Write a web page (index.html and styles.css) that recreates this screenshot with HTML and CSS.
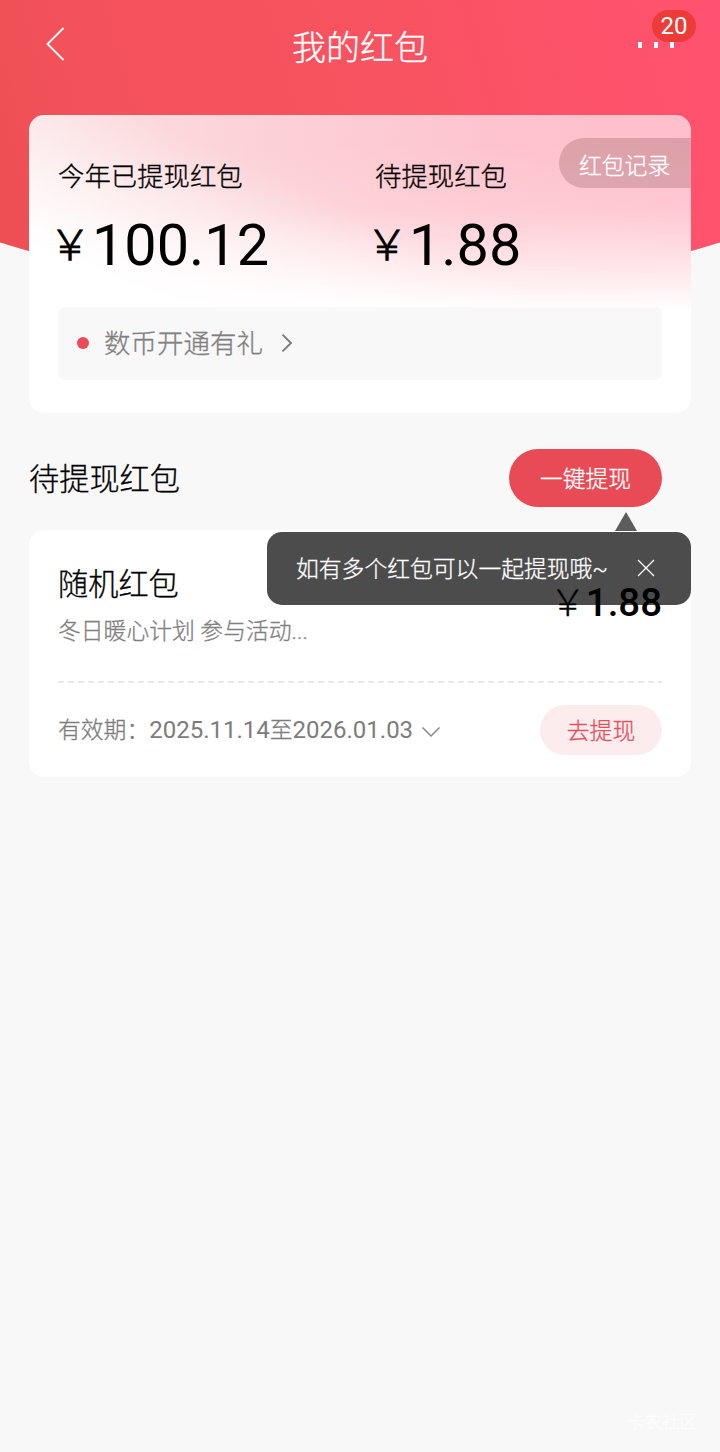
FILE: index.html
```html
<!DOCTYPE html>
<html lang="zh-CN">
<head>
<meta charset="utf-8">
<title>我的红包</title>
<link rel="stylesheet" href="styles.css">
</head>
<body>
<div class="page">
  <div class="hero-bg"></div>
  <header class="nav">
    <svg class="nav-back" width="20" height="36" viewBox="0 0 20 36"><path d="M18.5 2 2.5 18l16 16"/></svg>
    <h1 class="nav-title">我的红包</h1>
    <div class="nav-more"><i></i><i></i><i></i><span class="badge">20</span></div>
  </header>

  <section class="summary">
    <div class="stats">
      <div class="stat"><div class="stat-label">今年已提现红包</div><div class="stat-value"><span class="yen">￥</span>100.12</div></div>
      <div class="stat"><div class="stat-label">待提现红包</div><div class="stat-value"><span class="yen">￥</span>1.88</div></div>
    </div>
    <a class="record">红包记录</a>
    <div class="notice">
      <span class="dot"></span><span class="notice-text">数币开通有礼</span>
      <svg class="chevron" width="12" height="20" viewBox="0 0 12 20"><path d="m1.5 1.7 8.5 8.3-8.5 8.3"/></svg>
    </div>
  </section>

  <div class="section-head">
    <h2 class="section-title">待提现红包</h2>
    <button class="btn-all">一键提现</button>
  </div>

  <section class="packet">
    <div class="tip">
      <span class="tip-text">如有多个红包可以一起提现哦~</span>
      <svg class="tip-close" width="20" height="20" viewBox="0 0 20 20"><path d="m2 2 16 16M18 2 2 18"/></svg>
    </div>
    <div class="packet-top">
      <div>
        <h3 class="packet-name">随机红包</h3>
        <p class="packet-desc">冬日暖心计划 参与活动...</p>
      </div>
      <div class="packet-amount"><span class="yen-small">￥</span>1.88</div>
    </div>
    <div class="divider"></div>
    <div class="packet-foot">
      <span class="validity">有效期：<span class="date">2025.11.14</span>至<span class="date">2026.01.03</span></span>
      <svg class="expand" width="20" height="12" viewBox="0 0 20 12"><path d="m1.5 1.5 8.5 8.5 8.5-8.5"/></svg>
      <button class="btn-one">去提现</button>
    </div>
  </section>
  <div class="watermark">卡农社区</div>
</div>
</body>
</html>
```
FILE: styles.css
```css
* { box-sizing: border-box; }
body {
  margin: 0;
  background: #f8f8f8;
  font-family: Roboto, "Noto Sans CJK SC", sans-serif;
  font-weight: 300;
  -webkit-text-stroke: .3px currentColor;
  color: #000;
}
h1, h2, h3, p { margin: 0; font-weight: 300; }
svg { fill: none; display: block; }
button { border: 0; font: inherit; padding: 0; -webkit-text-stroke: .3px currentColor; }

.page {
  position: relative;
  height: 1452px;
  padding: 0 29px;
  display: flex;
  flex-direction: column;
  overflow: hidden;
}
.hero-bg {
  position: absolute;
  inset: 0 0 auto 0;
  height: 300px;
  background: linear-gradient(75deg, #ec4e52 0%, #f4525b 20%, #f85360 55%, #fd526a 82%, #ff5270 100%);
  clip-path: circle(1215px at 360px -918px);
}

.nav {
  position: relative;
  height: 115px;
  display: grid;
  grid-template-columns: 60px 1fr 60px;
  align-items: start;
}
.nav-back { margin: 26px 0 0 16px; stroke: #fff; stroke-width: 1.8; }
.nav-title {
  padding-top: 23px;
  font-size: 34px;
  line-height: 50px;
  color: #fff;
  text-align: center;
}
.nav-more { position: relative; z-index: 0; display: flex; gap: 12px; padding: 42px 0 0 7px; }
.nav-more i { width: 4px; height: 6px; background: #fff; }
.badge {
  position: absolute;
  top: 10px;
  left: 21px;
  width: 44px;
  height: 32px;
  border-radius: 16px;
  background: #ed3b38;
  color: #fff;
  font-size: 24px;
  font-weight: 400;
  -webkit-text-stroke: 0;
  line-height: 32px;
  text-align: center;
  z-index: -1;
}

.summary {
  position: relative;
  height: 298px;
  padding: 43px 29px 0;
  border-radius: 15px;
  background:
    linear-gradient(180deg, rgba(255,255,255,0) 10%, rgba(255,255,255,.15) 32%, rgba(255,255,255,.65) 53%, #fff 66%),
    linear-gradient(25deg, #fff 28%, rgba(255,255,255,0) 58%),
    linear-gradient(100deg, #fbe0e2 0%, #fcd1d6 35%, #fec4cd 65%, #ffbeca 100%);
}
.stats { display: grid; grid-template-columns: 317px 1fr; }
.stat-label { font-size: 26.4px; line-height: 38px; }
.stat-value {
  display: flex;
  align-items: baseline;
  margin-top: 12px;
  font-size: 57.6px;
  font-weight: 400;
  -webkit-text-stroke: 0;
  line-height: 76px;
  height: 76px;
}
.yen { position: relative; top: -5px; width: 43px; margin-left: -9px; font-size: 42px; font-weight: 300; -webkit-text-stroke: .8px currentColor; }
.record {
  position: absolute;
  top: 23px;
  right: 0;
  width: 132px;
  height: 50px;
  padding-left: 20px;
  border-radius: 25px 0 0 25px;
  background: rgba(111,58,62,.23);
  color: #fff;
  font-size: 22.8px;
  line-height: 58px;
}
.notice {
  display: flex;
  align-items: center;
  height: 73px;
  margin-top: 23px;
  padding: 0 0 1px 19px;
  border-radius: 7px;
  background: #f8f8f8;
  color: #808080;
  font-size: 26.5px;
}
.notice-text { padding-bottom: 3px; }
.dot { width: 12px; height: 12px; margin-right: 15px; border-radius: 50%; background: #ed4a59; }
.chevron { margin-left: 18px; stroke: #777; stroke-width: 1.8; }

.section-head {
  display: flex;
  align-items: center;
  justify-content: space-between;
  height: 58px;
  margin-top: 36px;
  padding-right: 29px;
}
.section-title { padding-bottom: 3px; font-size: 30.2px; }
.btn-all {
  width: 153px;
  height: 58px;
  padding-bottom: 2px;
  border-radius: 29px;
  background: #e84a56;
  color: #fff;
  font-size: 22.8px;
}

.packet {
  position: relative;
  height: 247px;
  margin-top: 23px;
  padding: 0 29px;
  border-radius: 15px;
  background: #fff;
}
.tip {
  position: absolute;
  top: 2px;
  right: 0;
  width: 424px;
  height: 73px;
  padding: 0 35px 2px 29px;
  display: flex;
  align-items: center;
  justify-content: space-between;
  border-radius: 15px;
  background: #4c4c4c;
  color: #fff;
  font-size: 22.8px;
}
.tip::before {
  content: "";
  position: absolute;
  top: -20px;
  right: 54px;
  border: 11px solid transparent;
  border-top: 0;
  border-bottom: 19px solid #5c5c5c;
}
.tip-text { white-space: nowrap; padding-bottom: 1px; }
.tip-close { stroke: #fff; stroke-width: 1.3; }
.packet-top { display: flex; justify-content: space-between; height: 151px; padding-top: 33px; }
.packet-name { font-size: 30.2px; line-height: 44px; }
.packet-desc { margin-top: 8px; font-size: 22.8px; line-height: 34px; color: #808080; }
.packet-amount {
  position: relative;
  z-index: 1;
  display: flex;
  align-items: baseline;
  height: 50px;
  margin-top: 15px;
  font-size: 38.4px;
  font-weight: 500;
  -webkit-text-stroke: 0;
  line-height: 50px;
}
.yen-small { width: 36px; font-size: 36px; font-weight: 300; -webkit-text-stroke: .3px currentColor; }
.divider {
  height: 2px;
  background: repeating-linear-gradient(90deg, #e8e8e8 0 6px, transparent 6px 10px);
}
.packet-foot { display: flex; align-items: center; height: 94px; color: #7c7c7c; }
.validity { padding-bottom: 3px; font-size: 22.8px; }
.date { font-size: 24px; font-weight: 400; -webkit-text-stroke: 0; }
.expand { margin: 4px 0 0 8px; stroke: #888; stroke-width: 1.5; }
.btn-one {
  width: 122px;
  height: 50px;
  margin-left: auto;
  padding-bottom: 2px;
  border-radius: 25px;
  background: #fdecee;
  color: #df5262;
  font-size: 22.8px;
}
.watermark {
  align-self: flex-end;
  margin: auto -6px 18px 0;
  font-size: 17.5px;
  line-height: 24px;
  color: #fefefe;
}
```
